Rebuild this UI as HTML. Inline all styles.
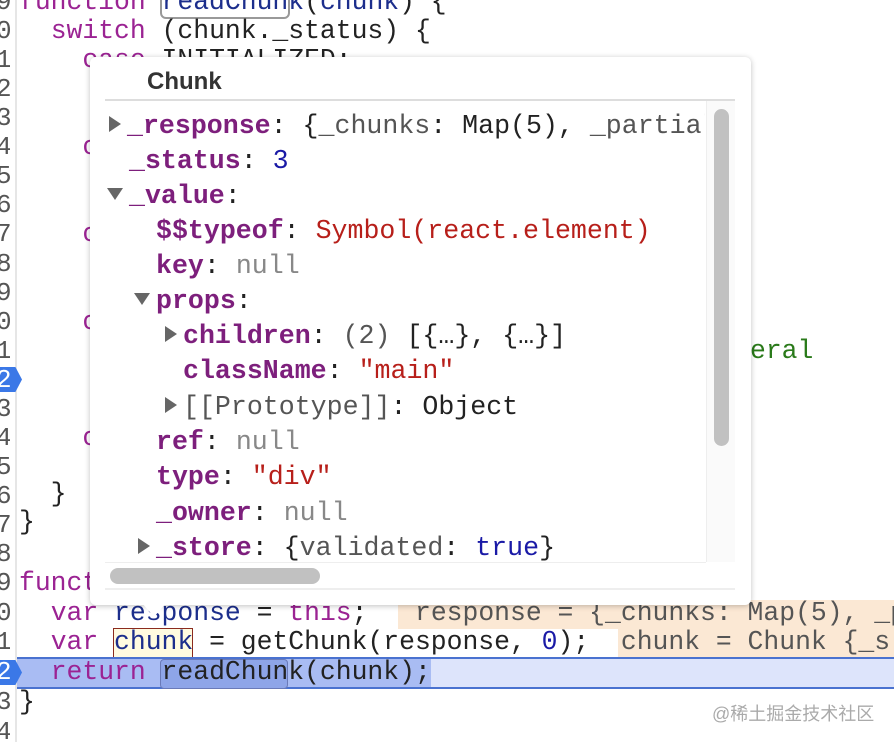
<!DOCTYPE html>
<html><head><meta charset="utf-8"><style>
*{margin:0;padding:0;box-sizing:border-box}
body{width:894px;height:742px;overflow:hidden;background:#fff;position:relative;font-family:"Liberation Mono",monospace;font-size:26.4px;color:#222}
.l{position:absolute;left:19px;height:29px;line-height:29px;white-space:pre}
.n{position:absolute;left:-4px;width:14px;height:29px;line-height:29px;color:#555;font-size:26px;overflow:hidden;text-align:right}
.k{color:#9b2393}.f{color:#1c2e8c}.g{color:#2a7a1a}.num{color:#1a1aa6}
.gut{position:absolute;left:15px;top:0;width:2px;height:742px;background:#e6e6e6}
.pop{position:absolute;left:90px;top:57px;width:661px;height:548px;background:#fff;border-radius:6px;box-shadow:0 1px 6px rgba(0,0,0,.25)}
.r{position:absolute;height:35px;line-height:35px;white-space:pre;font-size:26.6px}
.p{color:#7d1f7c;font-weight:bold}.s{color:#b71f1a}.nl{color:#888}.gr{color:#555}
.tri{display:inline-block;width:0;height:0;border-top:8px solid transparent;border-bottom:8px solid transparent;border-left:12px solid #666;margin-right:6px;vertical-align:1px}
.trd{display:inline-block;width:0;height:0;border-left:8px solid transparent;border-right:8px solid transparent;border-top:12px solid #666;margin-right:6px;vertical-align:3px}
.mk{position:absolute;left:0;width:22px;height:25px;background:#3b78e7;clip-path:polygon(0 0,70% 0,100% 50%,70% 100%,0 100%)}
</style></head><body>
<div class="gut"></div>
<div class="n" style="top:-12px">9</div>
<div class="n" style="top:17px">0</div>
<div class="n" style="top:46px">1</div>
<div class="n" style="top:75px">2</div>
<div class="n" style="top:104px">3</div>
<div class="n" style="top:133px">4</div>
<div class="n" style="top:162px">5</div>
<div class="n" style="top:191px">6</div>
<div class="n" style="top:220px">7</div>
<div class="n" style="top:250px">8</div>
<div class="n" style="top:279px">9</div>
<div class="n" style="top:308px">0</div>
<div class="n" style="top:337px">1</div>
<div class="mk" style="top:367px"></div>
<div class="n" style="top:366px;color:#fff">2</div>
<div class="n" style="top:395px">3</div>
<div class="n" style="top:424px">4</div>
<div class="n" style="top:453px">5</div>
<div class="n" style="top:482px">6</div>
<div class="n" style="top:511px">7</div>
<div class="n" style="top:540px">8</div>
<div class="n" style="top:569px">9</div>
<div class="n" style="top:599px">0</div>
<div class="n" style="top:628px">1</div>
<div class="n" style="top:688px">3</div>
<div class="n" style="top:718px">4</div>

<div class="l" style="top:-12px"><span class="k">function</span> <span class="f" style="outline:2px solid #999;border-radius:4px">readChun</span><span class="f">k</span>(<span class="f">chunk</span>) {</div>
<div class="l" style="top:17px">  <span class="k">switch</span> (chunk._status) {</div>
<div class="l" style="top:46px">    <span class="k">case</span> INITIALIZED:</div>
<div class="l" style="top:133px">    <span class="k">c</span></div>
<div class="l" style="top:220px">    <span class="k">c</span></div>
<div class="l" style="top:308px">    <span class="k">c</span></div>
<div class="l" style="top:337px;left:750px"><span class="g">eral</span></div>
<div class="l" style="top:424px">    <span class="k">c</span></div>
<div class="l" style="top:480px">  }</div>
<div class="l" style="top:508px">}</div>
<div class="l" style="top:569px"><span class="k">function</span></div>
<div style="position:absolute;left:398px;top:600px;width:496px;height:29px;background:#fbe8d4"></div>
<div class="l" style="top:599px">  <span class="k">var</span> <span class="f">response</span> = <span class="k">this</span>;  <span class="gr"> response = {_chunks: Map(5), _p</span></div>
<div style="position:absolute;left:618px;top:629px;width:276px;height:29px;background:#fbe8d4"></div>
<div style="position:absolute;left:113px;top:628px;width:80px;height:30px;background:#fffbe0;border:1.5px solid #8b2b1e"></div>
<div class="l" style="top:628px">  <span class="k">var</span> <span class="f">chunk</span> = getChunk(response, <span class="num">0</span>);  <span class="gr">chunk = Chunk {_s</span></div>
<div style="position:absolute;left:17px;top:657px;width:877px;height:32px;background:#dde4fb;border-top:2px solid #4a72d0;border-bottom:2px solid #4a72d0"></div>
<div style="position:absolute;left:17px;top:659px;width:414px;height:28px;background:#a9bcf3"></div>
<div style="position:absolute;left:160px;top:659px;width:128px;height:30px;border:1.5px solid #6a7ab8;border-radius:4px;background:#8ea5e8"></div>
<div class="mk" style="top:660px"></div>
<div class="n" style="top:658px;color:#fff">2</div>
<div class="l" style="top:658px">  <span class="k">return</span> readChunk(chunk);</div>
<div class="l" style="top:688px">}</div>
<div style="position:absolute;left:712px;top:700px;font:18px 'Liberation Sans','Noto Sans CJK SC',sans-serif;color:#aaa">@稀土掘金技术社区</div>

<div class="pop">
 <div style="position:absolute;left:57px;top:11px;font:bold 24px 'Liberation Sans',sans-serif;color:#333">Chunk</div>
 <div style="position:absolute;left:15px;top:42px;width:630px;height:491px;border-top:2px solid #ddd;border-bottom:2px solid #eee"></div>
 <div style="position:absolute;left:616px;top:44px;width:29px;height:461px;border-left:1px solid #eee;background:#fafafa"></div>
 <div style="position:absolute;left:624px;top:52px;width:15px;height:337px;border-radius:8px;background:#c1c1c1"></div>
 <div style="position:absolute;left:15px;top:505px;width:601px;height:1px;background:#eee"></div>
 <div style="position:absolute;left:20px;top:511px;width:210px;height:16px;border-radius:8px;background:#c1c1c1"></div>
 <div style="position:absolute;left:15px;top:44px;width:600px;height:460px;overflow:hidden">
  <div class="r" style="left:4px;top:8px"><span class="tri"></span><span class="p">_response</span>: {<span class="gr">_chunks</span>: Map(5), <span class="gr">_partial</span></div>
  <div class="r" style="left:24px;top:43px"><span class="p">_status</span>: <span class="num">3</span></div>
  <div class="r" style="left:2px;top:78px"><span class="trd"></span><span class="p">_value</span>:</div>
  <div class="r" style="left:51px;top:113px"><span class="p">$$typeof</span>: <span class="s">Symbol(react.element)</span></div>
  <div class="r" style="left:51px;top:148px"><span class="p">key</span>: <span class="nl">null</span></div>
  <div class="r" style="left:29px;top:183px"><span class="trd"></span><span class="p">props</span>:</div>
  <div class="r" style="left:60px;top:218px"><span class="tri"></span><span class="p">children</span>: <span class="gr">(2)</span> [{…}, {…}]</div>
  <div class="r" style="left:78px;top:253px"><span class="p">className</span>: <span class="s">"main"</span></div>
  <div class="r" style="left:60px;top:289px"><span class="tri"></span><span class="gr">[[Prototype]]</span>: Object</div>
  <div class="r" style="left:51px;top:324px"><span class="p">ref</span>: <span class="nl">null</span></div>
  <div class="r" style="left:51px;top:359px"><span class="p">type</span>: <span class="s">"div"</span></div>
  <div class="r" style="left:51px;top:395px"><span class="p">_owner</span>: <span class="nl">null</span></div>
  <div class="r" style="left:33px;top:430px"><span class="tri"></span><span class="p">_store</span>: {<span class="gr">validated</span>: <span class="num">true</span>}</div>
 </div>
 <div style="position:absolute;left:52px;top:546px;width:24px;height:14px;background:#fff;clip-path:polygon(0 0,100% 0,50% 100%)"></div>
</div>
</body></html>
